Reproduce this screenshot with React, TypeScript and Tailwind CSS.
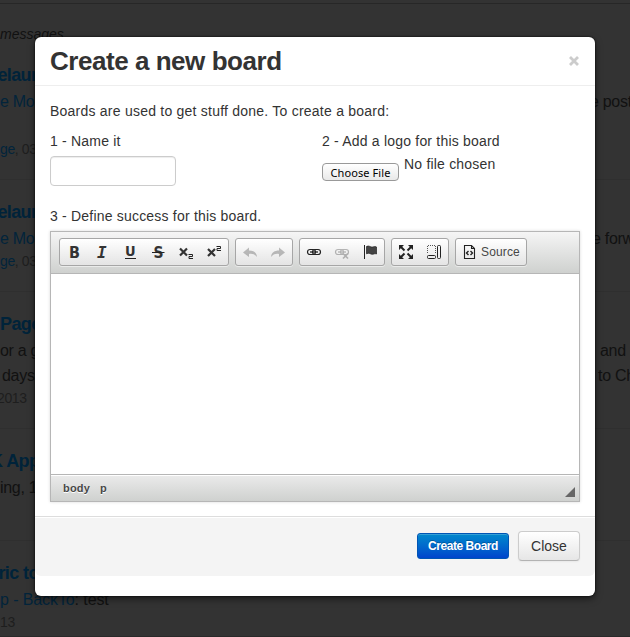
import type { ReactNode } from "react";

type Post = { title: string; shift: string; lines: ReactNode[]; meta: ReactNode };

const blue = "text-[#02243b]";

const posts: Post[] = [
  {
    title: "Relaunch",
    shift: "-ml-[15px]",
    lines: [
      <Line key="a" left={<span className={blue}>e Mood</span>} right="e post" start="ml-[590px]" />,
      <Line key="b" left="" right="" start="ml-0" />,
    ],
    meta: <><span className={blue}>ge</span>, 03</>,
  },
  {
    title: "Relaunch",
    shift: "-ml-[15px]",
    lines: [<Line key="a" left={<span className={blue}>e Mood</span>} right="e forward" start="ml-[592px]" />],
    meta: <><span className={blue}>ge</span>, 03</>,
  },
  {
    title: "Page",
    shift: "ml-0",
    lines: [
      <Line key="a" left="or a g" right="and" start="ml-[600px]" />,
      <Line key="b" left={<span className="ml-[2px]">days</span>} right="to Charlie" start="ml-[598px]" />,
    ],
    meta: <span className="-ml-[3px]">2013</span>,
  },
  {
    title: "K App",
    shift: "-ml-[10px]",
    lines: [<Line key="a" left="ing, 12" right="" start="ml-0" />],
    meta: "",
  },
  {
    title: "eric to",
    shift: "-ml-[11px]",
    lines: [<Line key="a" left={<span className="tracking-[-0.1px]"><span className={blue}>p - BackTo</span>: test</span>} right="" start="ml-0" />],
    meta: "13",
  },
];

function Line({ left, right, start }: { left: ReactNode; right: string; start: string }) {
  return (
    <div className="grid h-[25px] grid-cols-1 overflow-hidden whitespace-nowrap text-[16px] leading-[25px] tracking-[-0.3px]">
      <span className="col-start-1 row-start-1">{left}</span>
      <span className={"col-start-1 row-start-1 " + start}>{right}</span>
    </div>
  );
}

function Feed() {
  return (
    <div className="h-[637px] overflow-hidden border-b border-[#292929] bg-[#333] text-[#111]">
      <div className="h-[43px] border-t-[3px] border-[#333]">
        <div className="border-t border-[#272727] pt-[20px] text-[14px] italic leading-[20px]">messages</div>
      </div>
      {posts.map((p, i) => (
        <div key={i} className="overflow-hidden border-b border-[#2f2f2f] pb-[19px] pt-[20px]">
          <div className={"h-[26px] whitespace-nowrap text-[18px] font-bold leading-[25px] tracking-[-0.6px] text-[#00233a] " + p.shift}>{p.title}</div>
          {p.lines}
          <div className="h-[21px] text-[14px] leading-[21px] tracking-[-0.4px] text-[#1e1e1e]">{p.meta}</div>
        </div>
      ))}
    </div>
  );
}

function Group({ children }: { children: ReactNode }) {
  return (
    <div className="flex h-[28px] items-center rounded-[3px] border border-[#a6a6a6] bg-linear-to-b from-white to-[#e4e4e4] shadow-[0_1px_0_rgba(255,255,255,.5),inset_0_0_2px_rgba(255,255,255,.15)]">
      {children}
    </div>
  );
}

function Tool({ children, faded }: { children: ReactNode; faded?: boolean }) {
  return (
    <span className={"flex h-[26px] w-[28px] items-center justify-center " + (faded ? "opacity-30" : "")}>
      <svg width="16" height="16" viewBox="0 0 16 16" fill="none" stroke="#222">{children}</svg>
    </span>
  );
}

const glyph = { fill: "#333", stroke: "none", fontWeight: 700, textAnchor: "middle" as const };
const sans = "DejaVu Sans Condensed, DejaVu Sans, sans-serif";

function Chain() {
  return (
    <>
      <rect x="1.5" y="5.5" width="8" height="5" rx="2.5" strokeWidth="1.2" />
      <rect x="6.5" y="5.5" width="8" height="5" rx="2.5" strokeWidth="1.2" />
      <path d="M4 8h8" strokeWidth="1.3" />
    </>
  );
}

function Toolbar() {
  return (
    <div className="flex h-[42px] gap-[6px] border-b border-[#b6b6b6] bg-linear-to-b from-[#f5f5f5] to-[#cfd1cf] pl-[8px] pt-[6px]">
      <Group>
        <Tool><text x="8.500" y="14" fontSize="16" fontFamily={sans} {...glyph}>B</text></Tool>
        <Tool><text x="8" y="14" fontSize="16" fontFamily="DejaVu Sans Mono, monospace" fontStyle="italic" {...glyph}>I</text></Tool>
        <Tool>
          <text x="8.500" y="12" fontSize="14.500" fontFamily={sans} {...glyph}>U</text>
          <path d="M3 14.5h11" stroke="#222" />
        </Tool>
        <Tool>
          <text x="8.500" y="13.500" fontSize="15.500" fontFamily={sans} {...glyph}>S</text>
          <path d="M2 8.5h12.5" stroke="#222" />
        </Tool>
        <Tool>
          <path d="M2 4.5l7 7M9 4.5l-7 7" stroke="#333" strokeWidth="2.2" />
          <path d="M10.5 10.5h4v2h-3.5v2h4" />
        </Tool>
        <Tool>
          <path d="M2 5l7 7M9 5l-7 7" stroke="#333" strokeWidth="2.2" />
          <path d="M10.5 2.5h4v2h-3.5v2h4" />
        </Tool>
      </Group>
      <Group>
        <Tool faded><path d="M7 3.5L1 8.5l6 4.5v-3c4-.6 6 .7 8 3-.3-4-3-6.500-8-6.500z" fill="#333" stroke="none" /></Tool>
        <Tool faded><path d="M9 3.500l6 5-6 4.500v-3c-4-.6-6 .7-8 3 .3-4 3-6.500 8-6.500z" fill="#333" stroke="none" /></Tool>
      </Group>
      <Group>
        <Tool><Chain /></Tool>
        <Tool faded><Chain /><path d="M9 9.500l5 5M14 9.500l-5 5" strokeWidth="1.6" /></Tool>
        <Tool>
          <path d="M2.500 1v14" />
          <path d="M4.500 2.500c2.500-1.500 4 1 6 .5 1.500-.3 2.500-.8 4 0v7c-2-.8-2.500.2-4 .3-2 0-3.500-2-6-.5z" fill="#444" strokeWidth=".7" />
        </Tool>
      </Group>
      <Group>
        <Tool>
          <path d="M2.500 2.500l4 4M13.500 2.500l-4 4M2.500 13.500l4-4M13.500 13.500l-4-4" strokeWidth="2" />
          <path d="M1 1h5L1 6zM15 1h-5l5 5zM1 15h5l-5-5zM15 15h-5l5-5z" fill="#222" stroke="none" />
        </Tool>
        <Tool>
          <path d="M1.500 9V1.500H9.500V9" strokeDasharray="1 1" stroke="#555" />
          <rect x="1.500" y="11.500" width="8" height="3" rx="1" />
          <rect x="11.500" y="1.500" width="3" height="13" rx="1" />
        </Tool>
      </Group>
      <Group>
        <Tool>
          <path d="M2.500 1.500h7l3 3v10h-10zM9.500 1.500v3h3" strokeWidth="1.1" />
          <path d="M6.500 7l-2 2 2 2M8.500 7l2 2-2 2" strokeWidth="1.4" />
        </Tool>
        <span className="-ml-[3px] w-[45px] whitespace-nowrap text-[12px] leading-[26px] tracking-[0.15px] text-[#474747]">Source</span>
      </Group>
    </div>
  );
}

function Modal() {
  return (
    <div className="absolute left-[35px] top-[37px] h-[559px] w-[560px] rounded-[6px] bg-white text-[14px] leading-[20px] text-[#333] shadow-[0_3px_7px_rgba(0,0,0,.5),0_0_2px_#000]">
      <div className="flex h-[49px] justify-between border-b border-[#eee] pl-[15px] pr-[15px]">
        <h3 className="pt-[9px] text-[26px] font-bold leading-[30px] tracking-[-0.46px]">Create a new board</h3>
        <svg className="mt-[18px]" width="12" height="12" viewBox="0 0 12 12"><path d="M2 2l8 8M10 2l-8 8" stroke="#ccc" strokeWidth="2.8" /></svg>
      </div>
      <div className="h-[430px] px-[15px] pt-[15px] tracking-[0.2px]">
        <p className="whitespace-nowrap tracking-[0.23px]">Boards are used to get stuff done. To create a board:</p>
        <div className="mt-[10px] flex h-[65px]">
          <div className="w-[272px]">
            <label className="block">1 - Name it</label>
            <input className="mt-[5px] block h-[30px] w-[126px] rounded-[4px] border border-[#ccc] shadow-[inset_0_1px_1px_rgba(0,0,0,.075)]" />
          </div>
          <div>
            <label className="block whitespace-nowrap">2 - Add a logo for this board</label>
            <div className="flex">
              <button className="mt-[12px] h-[18px] w-[77px] whitespace-nowrap rounded-[4px] border border-[#999] bg-linear-to-b from-white to-[#e9e9e9] font-['Noto_Sans',sans-serif] text-[11px] leading-[17px] tracking-[0.1px] text-black">Choose File</button>
              <span className="ml-[5px] mt-[3px] whitespace-nowrap">No file chosen</span>
            </div>
          </div>
        </div>
        <p className="mt-[10px] whitespace-nowrap">3 - Define success for this board.</p>
        <div className="mt-[5px] flex h-[271px] flex-col border border-[#b6b6b6] shadow-[0_0_3px_rgba(0,0,0,.15)]">
          <Toolbar />
          <div className="flex-1 bg-white" />
          <div className="flex h-[27px] justify-between border-t border-[#b6b6b6] bg-linear-to-b from-[#ebebeb] to-[#cfd1cf] pl-[12px] pr-[4px] text-[11px] font-bold leading-[27px] text-[#484848] shadow-[inset_0_1px_0_#fff]">
            <div className="flex gap-[10px] [text-shadow:0_1px_0_white]"><span>body</span><span>p</span></div>
            <svg className="mt-[12px]" width="10" height="10"><path d="M10 0v10H0z" fill="#666" /></svg>
          </div>
        </div>
      </div>
      <div className="flex h-[60px] justify-end gap-[9px] rounded-b-[6px] border-t border-[#ddd] bg-[#f4f4f4] pr-[15px] pt-[14px] shadow-[inset_0_1px_0_#fff]">
        <button className="mt-[2px] h-[26px] w-[92px] whitespace-nowrap rounded-[3px] border border-[#0055b5] bg-linear-to-b from-[#0088cc] to-[#0044cc] text-[12px] font-bold leading-[24px] tracking-[-0.45px] text-white shadow-[inset_0_1px_0_rgba(255,255,255,.2)] [text-shadow:0_-1px_0_rgba(0,0,0,.25)]">Create Board</button>
        <button className="h-[30px] w-[62px] rounded-[4px] border border-[#ccc] border-b-[#b3b3b3] bg-linear-to-b from-white to-[#e6e6e6] leading-[28px] text-[#333] shadow-[0_1px_2px_rgba(0,0,0,.05)]">Close</button>
      </div>
    </div>
  );
}

export default function App() {
  return (
    <div className="relative h-[637px] w-[630px] overflow-hidden font-['Liberation_Sans',Arial,sans-serif]">
      <Feed />
      <Modal />
    </div>
  );
}
